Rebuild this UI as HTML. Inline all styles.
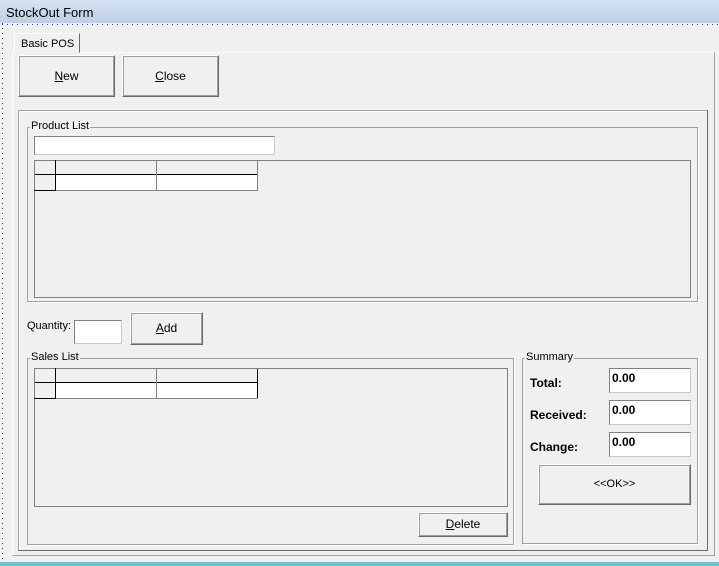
<!DOCTYPE html>
<html><head><style>
*{box-sizing:border-box;margin:0;padding:0}
body{width:719px;height:566px;background:#f0f0f0;font-family:"Liberation Sans",sans-serif;font-size:12px;position:relative;overflow:hidden;color:#000}
.a{position:absolute}
.btn{position:absolute;background:#f0f0f0;border:1px solid;border-color:#fff #696969 #696969 #fff;box-shadow:1px 1px 0 #a0a0a0 inset,-1px -1px 0 #a0a0a0 inset;text-align:center;font-size:12px}
.tb{position:absolute;background:#fff;border:1px solid;border-color:#808080 #c8c8c8 #c8c8c8 #808080}
.grp{position:absolute;border:1px solid #a0a0a0;box-shadow:1px 1px 0 #fff}
.lg{position:absolute;top:-8px;left:2px;background:#f0f0f0;font-size:11px;padding:0 1px}
.grid{position:absolute;border:1px solid #808080;background:#f0f0f0}
.lbl{position:absolute;font-weight:bold;font-size:12px}
.val{font-weight:bold;font-size:12px;padding:2px 0 0 2px}
</style></head><body>
<div class="a" style="left:0;top:0;width:719px;height:23px;background:linear-gradient(#d6e3f2,#bccfe6)"></div>
<div class="a" style="left:6px;top:5px;font-size:13px">StockOut Form</div>
<div class="a" style="left:2px;top:23px;width:1px;height:540px;background:repeating-linear-gradient(#444 0 1px,transparent 1px 5px)"></div>
<div class="a" style="left:2px;top:24px;width:717px;height:1px;background:repeating-linear-gradient(90deg,#444 0 1px,transparent 1px 5px)"></div>
<div class="a" style="left:12px;top:52px;width:703px;height:504px;border:1px solid;border-color:#fff #a0a0a0 #a0a0a0 #fff"></div>
<div class="a" style="left:14px;top:33px;width:66px;height:20px;border:1px solid;border-color:#fff #696969 #f0f0f0 #fff;background:#f0f0f0;padding:4px 0 0 6px;white-space:nowrap;font-size:11px">Basic POS</div>
<div class="btn" style="left:18px;top:55px;width:97px;height:42px;line-height:40px"><u>N</u>ew</div>
<div class="btn" style="left:122px;top:55px;width:97px;height:42px;line-height:40px"><u>C</u>lose</div>
<div class="a" style="left:18px;top:110px;width:690px;height:441px;border:1px solid;border-color:#a0a0a0 #696969 #696969 #a0a0a0;box-shadow:1px 1px 0 #fff inset"></div>
<div class="grp" style="left:27px;top:127px;width:671px;height:175px"><span class="lg">Product List</span></div>
<div class="tb" style="left:34px;top:136px;width:241px;height:19px"></div>
<div class="grid" style="left:34px;top:160px;width:657px;height:138px">
 <div class="a" style="left:20px;top:-1px;width:1px;height:30px;background:#000"></div>
 <div class="a" style="left:-1px;top:29px;width:22px;height:1px;background:#000"></div>
 <div class="a" style="left:21px;top:14px;width:202px;height:15px;background:#fff"></div>
 <div class="a" style="left:0;top:13px;width:223px;height:1px;background:#000"></div>
 <div class="a" style="left:121px;top:0;width:1px;height:29px;background:#808080"></div>
 <div class="a" style="left:222px;top:0;width:1px;height:29px;background:#808080"></div>
 <div class="a" style="left:21px;top:29px;width:202px;height:1px;background:#808080"></div>
</div>
<div class="a" style="left:27px;top:320px;font-size:11px">Quantity:</div>
<div class="tb" style="left:74px;top:320px;width:48px;height:24px"></div>
<div class="btn" style="left:130px;top:312px;width:73px;height:33px;line-height:31px"><u>A</u>dd</div>
<div class="grp" style="left:27px;top:358px;width:487px;height:187px"><span class="lg">Sales List</span></div>
<div class="grid" style="left:34px;top:368px;width:474px;height:139px">
 <div class="a" style="left:20px;top:-1px;width:1px;height:31px;background:#000"></div>
 <div class="a" style="left:-1px;top:29px;width:22px;height:1px;background:#000"></div>
 <div class="a" style="left:21px;top:14px;width:202px;height:15px;background:#fff"></div>
 <div class="a" style="left:0;top:13px;width:223px;height:1px;background:#000"></div>
 <div class="a" style="left:121px;top:0;width:1px;height:29px;background:#808080"></div>
 <div class="a" style="left:222px;top:0;width:1px;height:29px;background:#000"></div>
 <div class="a" style="left:21px;top:29px;width:202px;height:1px;background:#808080"></div>
</div>
<div class="btn" style="left:418px;top:512px;width:90px;height:25px;line-height:23px"><u>D</u>elete</div>
<div class="grp" style="left:522px;top:358px;width:176px;height:186px"><span class="lg">Summary</span></div>
<div class="lbl" style="left:530px;top:376px">Total:</div>
<div class="lbl" style="left:530px;top:408px">Received:</div>
<div class="lbl" style="left:530px;top:440px">Change:</div>
<div class="tb val" style="left:609px;top:368px;width:82px;height:25px">0.00</div>
<div class="tb val" style="left:609px;top:400px;width:82px;height:25px">0.00</div>
<div class="tb val" style="left:609px;top:432px;width:82px;height:25px">0.00</div>
<div class="btn" style="left:538px;top:464px;width:153px;height:41px;line-height:39px;font-size:11px">&lt;&lt;OK&gt;&gt;</div>
<div class="a" style="left:0;top:562px;width:719px;height:4px;background:#5cc8d6"></div>
</body></html>
